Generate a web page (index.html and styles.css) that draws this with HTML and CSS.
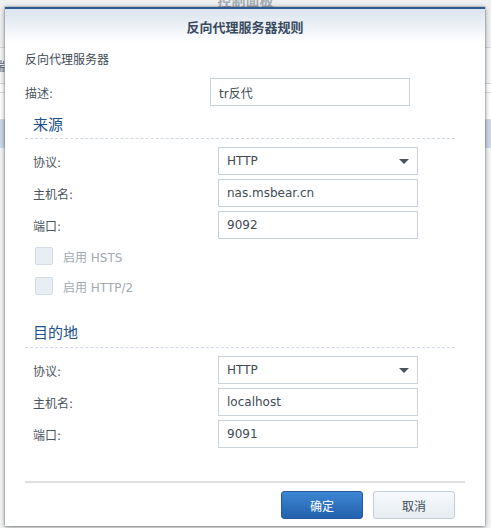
FILE: index.html
```html
<!DOCTYPE html>
<html lang="zh-CN">
<head>
<meta charset="utf-8">
<title>反向代理服务器规则</title>
<link rel="stylesheet" href="styles.css">
</head>
<body>
<div class="cp">
  <div class="cp-head"><span class="cp-title">控制面板</span></div>
  <div class="cp-toolbar"><span class="cp-col">端口</span></div>
  <div class="cp-row thin"></div>
  <div class="cp-row"></div>
  <div class="cp-row selected"></div>
  <div class="cp-rest"></div>
</div>

<div class="dialog">
  <div class="dlg-head">反向代理服务器规则</div>
  <div class="dlg-body">
    <div class="intro">反向代理服务器</div>
    <div class="form-row desc-row">
      <span class="label">描述:</span>
      <div class="input">tr反代</div>
    </div>

    <div class="section-title">来源</div>
    <div class="fields">
      <div class="form-row"><span class="label">协议:</span><div class="input select">HTTP<span class="arrow"></span></div></div>
      <div class="form-row"><span class="label">主机名:</span><div class="input">nas.msbear.cn</div></div>
      <div class="form-row"><span class="label">端口:</span><div class="input">9092</div></div>
    </div>
    <div class="checks">
      <div class="check"><span class="box"></span><span>启用 HSTS</span></div>
      <div class="check"><span class="box"></span><span>启用 HTTP/2</span></div>
    </div>

    <div class="section-title second">目的地</div>
    <div class="fields">
      <div class="form-row"><span class="label">协议:</span><div class="input select">HTTP<span class="arrow"></span></div></div>
      <div class="form-row"><span class="label">主机名:</span><div class="input">localhost</div></div>
      <div class="form-row"><span class="label">端口:</span><div class="input">9091</div></div>
    </div>
  </div>
  <div class="dlg-foot">
    <button class="btn primary">确定</button>
    <button class="btn">取消</button>
  </div>
</div>
</body>
</html>
```

FILE: styles.css
```css
html, body {
  margin: 0;
  padding: 0;
}
body {
  width: 491px;
  height: 528px;
  overflow: hidden;
  position: relative;
  background: #ffffff;
  font-family: "DejaVu Sans", "Noto Sans CJK SC", sans-serif;
  font-size: 12px;
  color: #414b55;
}

/* background control panel window */
.cp {
  display: flex;
  flex-direction: column;
  height: 528px;
}
.cp-head {
  height: 47px;
  background: #eff0f2;
  border-bottom: 1px solid #d6d9dc;
  display: flex;
  justify-content: center;
  overflow: hidden;
}
.cp-title {
  margin-top: -8px;
  font-size: 14px;
  font-weight: bold;
  line-height: 18px;
  color: #a4acb4;
}
.cp-toolbar {
  height: 35px;
  background: #f6f7f8;
  border-bottom: 1px solid #d3d7db;
  display: flex;
  align-items: center;
  overflow: hidden;
}
.cp-col {
  margin-left: -7px;
  color: #5a6570;
  font-size: 12px;
}
.cp-row {
  height: 26px;
  background: #ffffff;
  border-bottom: 1px solid #dadee2;
}
.cp-row.thin {
  height: 8px;
}
.cp-row.selected {
  height: 28px;
  background: #cbd9ea;
  border-bottom: none;
}
.cp-rest {
  flex: 1;
  background: #f4f5f6;
}

/* dialog */
.dialog {
  position: absolute;
  left: 5px;
  top: 7px;
  width: 480px;
  height: 519px;
  box-sizing: border-box;
  background: #ffffff;
  border-top: 2px solid #2d5b92;
  box-shadow: 0 0 0 1px rgba(0, 0, 0, 0.10), 0 1px 5px rgba(0, 0, 0, 0.45);
  display: flex;
  flex-direction: column;
}
.dlg-head {
  height: 34px;
  flex: none;
  background: linear-gradient(#dbe3ed, #ffffff);
  display: flex;
  align-items: center;
  justify-content: center;
  font-size: 13px;
  font-weight: bold;
  color: #3a4b61;
}
.dlg-body {
  flex: 1;
  padding: 7px 30px 0 20px;
}
.intro {
  line-height: 20px;
  color: #414b55;
}
.form-row {
  display: flex;
  align-items: center;
  height: 28px;
}
.desc-row {
  margin-top: 8px;
}
.label {
  width: 185px;
  flex: none;
  color: #4a5560;
}
.input {
  width: 200px;
  height: 28px;
  box-sizing: border-box;
  border: 1px solid #c8d2dc;
  padding: 0 8px;
  display: flex;
  align-items: center;
  color: #414b55;
  background: #ffffff;
}
.select .arrow {
  margin-left: auto;
  width: 0;
  height: 0;
  border-left: 5px solid transparent;
  border-right: 5px solid transparent;
  border-top: 5px solid #4b535d;
}
.section-title {
  margin-top: 9px;
  padding: 0 0 3px 8px;
  font-size: 15px;
  line-height: 20px;
  color: #22528a;
  border-bottom: 1px dashed #cfd9e4;
}
.section-title.second {
  margin-top: 28px;
  padding-bottom: 4px;
}
.fields {
  margin-top: 8px;
  padding-left: 8px;
  display: flex;
  flex-direction: column;
  gap: 4px;
}
.checks {
  margin-top: 8px;
  padding-left: 10px;
  display: flex;
  flex-direction: column;
  gap: 12px;
}
.check {
  display: flex;
  align-items: center;
  height: 18px;
  gap: 10px;
  color: #a2a9b1;
}
.box {
  width: 18px;
  height: 18px;
  box-sizing: border-box;
  background: #e8eef4;
  border: 1px solid #d3dce5;
  border-radius: 2px;
}
.dlg-foot {
  flex: none;
  margin: 0 20px;
  border-top: 2px solid #e0e0e0;
  padding: 8px 10px 7px 0;
  display: flex;
  justify-content: flex-end;
  gap: 10px;
}
.btn {
  width: 82px;
  height: 28px;
  box-sizing: border-box;
  border: 1px solid #c3cdd8;
  border-radius: 3px;
  background: linear-gradient(#f7f9fb, #e7edf3);
  font-family: "DejaVu Sans", "Noto Sans CJK SC", sans-serif;
  font-size: 12px;
  color: #414b55;
  padding: 0;
}
.btn.primary {
  border-color: #25599a;
  background: linear-gradient(#3d86d3, #2261ad);
  color: #ffffff;
}
```
